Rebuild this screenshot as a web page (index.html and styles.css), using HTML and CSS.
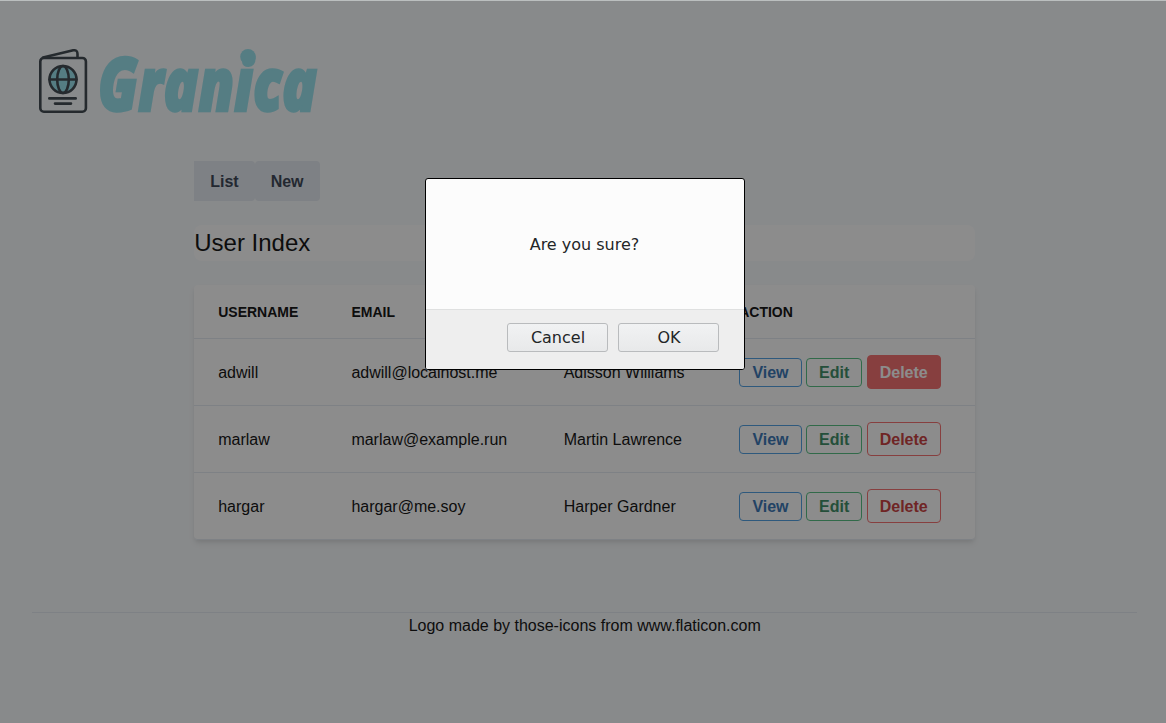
FILE: index.html
```html
<!DOCTYPE html>
<html lang="en">
<head>
<meta charset="utf-8">
<title>Granica</title>
<link rel="stylesheet" href="styles.css">
</head>
<body>
<div class="page">
  <header class="brand">
    <svg class="logo" width="310" height="90" viewBox="34 45 310 90" role="img" aria-label="Granica">
      <g fill="none" stroke="#303b43" stroke-width="2.6" stroke-linecap="round" stroke-linejoin="round">
        <path d="M43 57.5 73.2 50.3Q77.5 49.6 77.5 54V57"/>
        <rect x="40.3" y="58" width="45.6" height="53.7" rx="3.5"/>
        <circle cx="63" cy="79.5" r="13.5" fill="#90e0ed"/>
        <ellipse cx="63" cy="79.5" rx="5.8" ry="13.5"/>
        <path d="M49.5 79.5h27M49.300 98.400h26.400M55 103.600h16"/>
      </g>
      <text class="wordmark" x="98" y="111" textLength="219" lengthAdjust="spacingAndGlyphs">Granica</text>
      <circle class="dot" cx="248" cy="56.700" r="7.800"/>
    </svg>
  </header>
  <main class="container">
    <nav class="tabs"><a class="tab">List</a><a class="tab tab-last">New</a></nav>
    <h1 class="title">User Index</h1>
    <table class="users">
      <colgroup><col class="col-user"><col class="col-email"><col class="col-name"><col></colgroup>
      <thead><tr><th>Username</th><th>Email</th><th>Name</th><th>Action</th></tr></thead>
      <tbody>
        <tr><td>adwill</td><td>adwill@localhost.me</td><td>Adisson Williams</td>
          <td class="row-actions"><a class="btn view">View</a> <a class="btn edit">Edit</a> <button class="btn delete pressed">Delete</button></td></tr>
        <tr><td>marlaw</td><td>marlaw@example.run</td><td>Martin Lawrence</td>
          <td class="row-actions"><a class="btn view">View</a> <a class="btn edit">Edit</a> <button class="btn delete">Delete</button></td></tr>
        <tr><td>hargar</td><td>hargar@me.soy</td><td>Harper Gardner</td>
          <td class="row-actions"><a class="btn view">View</a> <a class="btn edit">Edit</a> <button class="btn delete">Delete</button></td></tr>
      </tbody>
    </table>
  </main>
  <footer class="footer">Logo made by those-icons from www.flaticon.com</footer>
</div>
<div class="overlay">
  <div class="dialog" role="dialog">
    <div class="message">Are you sure?</div>
    <div class="actions"><button class="dialog-btn">Cancel</button><button class="dialog-btn">OK</button></div>
  </div>
</div>
</body>
</html>
```
FILE: styles.css
```css
* { box-sizing: border-box; }
body {
  margin: 0;
  height: 723px;
  overflow: hidden;
  border-top: 1px solid #bbbfbf;
  background: #f7fafc;
  color: #000;
  font: 16px/24px "Liberation Sans", Arial, sans-serif;
}
.page { padding: 44px 28.6px 0 32px; }
.brand { height: 116px; padding-left: 2px; }
.logo { display: block; overflow: visible; }
.wordmark {
  font: italic 800 74px "Open Sans", sans-serif;
  fill: #90e0ed;
  stroke: #90e0ed;
  stroke-width: 2.4px;
}
.dot { fill: #90e0ed; }
.container { width: 781px; margin: 0 auto; }
.tabs { display: flex; height: 40px; }
.tab {
  padding: 9px 16px 7px;
  background: #e2e8f0;
  border-radius: 0 4px 4px 0;
  color: #2d3748;
  font-weight: 700;
}
.tab-last { padding-right: 16.3px; border-radius: 4px; }
.title {
  margin: 24px 0;
  background: #fff;
  border-radius: 8px;
  font-size: 24px;
  line-height: 36px;
  font-weight: 400;
}
.users {
  width: 781px;
  table-layout: fixed;
  border-collapse: separate;
  border-spacing: 0;
  background: #fff;
  border-radius: 4px;
  box-shadow: 0 4px 6px -1px rgba(0, 0, 0, .1), 0 2px 4px -1px rgba(0, 0, 0, .06);
}
.col-user { width: 133.2px; }
.col-email { width: 212.300px; }
.col-name { width: 175.500px; }
.users th {
  height: 54px;
  padding: 1px 0 0 24px;
  border-bottom: 1px solid #e2e8f0;
  text-align: left;
  text-transform: uppercase;
  font-size: 14px;
}
.users td {
  height: 67px;
  padding: 17px 0 15px 24px;
  border-bottom: 1px solid #e2e8f0;
  white-space: nowrap;
}
.users tr:last-child td:first-child { border-bottom-left-radius: 4px; }
.users tr:last-child td:last-child { border-bottom-right-radius: 4px; }
.users .row-actions { padding: 16px 0 16px 24.2px; }
.btn {
  padding: 5px 12px;
  border: 1px solid;
  border-radius: 4px;
  background: transparent;
  font: 700 16px/24px "Liberation Sans", Arial, sans-serif;
}
.view { border-color: #4299e1; color: #2b6cb0; }
.edit { border-color: #48bb78; color: #2f855a; }
.delete { padding: 5px 12px 3px; border-color: #f56565; color: #c53030; }
.pressed { background: #f56565; color: #fff; }
.footer {
  margin-top: 72px;
  padding-top: 1px;
  border-top: 1px solid #e2e8f0;
  text-align: center;
}
.overlay {
  position: absolute;
  inset: 1px 0 0;
  padding: 177px 0 0 425px;
  background: rgba(26, 26, 26, .5);
}
.dialog {
  width: 320px;
  height: 192px;
  overflow: hidden;
  border: 1px solid #000;
  border-radius: 3px;
  background: #fcfcfc;
  color: #232627;
  font: 16px/24px "DejaVu Sans", sans-serif;
}
.message {
  height: 130px;
  padding: 2px 1px 0 0;
  display: flex;
  align-items: center;
  justify-content: center;
}
.actions {
  display: flex;
  justify-content: flex-end;
  gap: 10px;
  height: 60px;
  padding: 13px 25px;
  border-top: 1px solid #dfe0e0;
  background: #eeeeee;
}
.dialog-btn {
  width: 101px;
  height: 29px;
  padding: 0 0 0 1px;
  border: 1px solid #b9bbbd;
  border-radius: 3px;
  background: linear-gradient(#f1f2f3, #e8e9ea);
  color: #232627;
  font: inherit;
}
```
